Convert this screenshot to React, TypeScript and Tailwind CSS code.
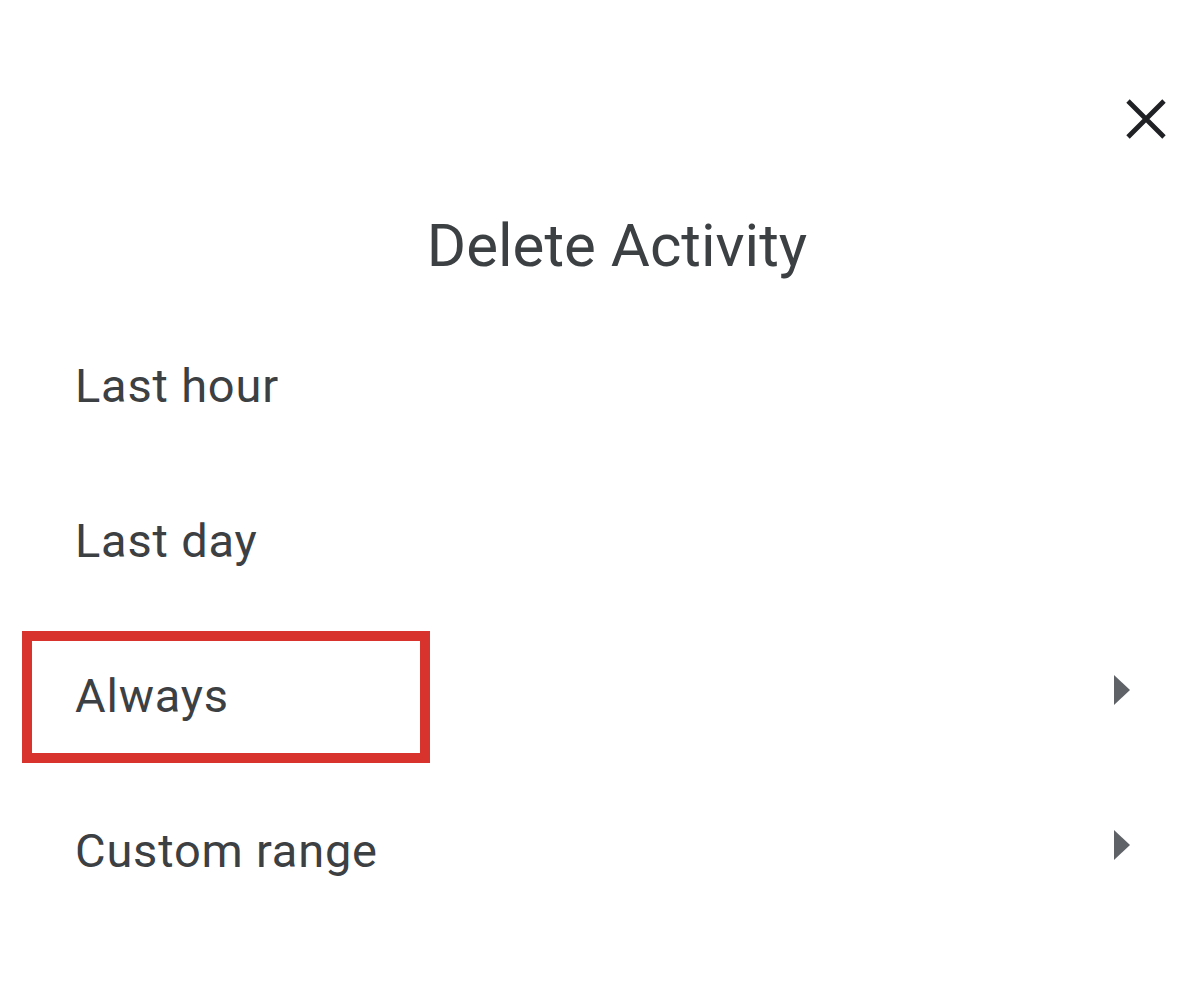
const items = [
  { label: 'Last hour', more: false, marked: false },
  { label: 'Last day', more: false, marked: false },
  { label: 'Always', more: true, marked: true },
  { label: 'Custom range', more: true, marked: false },
]

function CloseIcon() {
  return (
    <svg width="46" height="46" viewBox="0 0 24 24" fill="none">
      <path d="M3.5 3.5L20.5 20.5M20.5 3.5L3.5 20.5" stroke="#202124" strokeWidth="2.5" strokeLinecap="square" />
    </svg>
  )
}

function Caret() {
  return (
    <svg width="18" height="30" viewBox="0 0 18 30" className="-mt-[12px]">
      <path d="M1 0L17 15L1 30Z" fill="#5f6368" />
    </svg>
  )
}

export default function App() {
  return (
    <div
      className="w-[1178px] h-[1006px] bg-white overflow-hidden flex flex-col"
      style={{ fontFamily: 'Roboto, "Noto Sans", sans-serif' }}
    >
      <div className="flex justify-end pt-[96px] pr-[9px]">
        <button className="w-[46px] h-[46px] flex items-center justify-center">
          <CloseIcon />
        </button>
      </div>

      <h1 className="mt-[64px] h-[80px] leading-[80px] text-center pl-[56px] text-[60px] font-normal text-[#3c4043]">
        Delete Activity
      </h1>

      <ul className="mt-[22px] flex flex-col">
        {items.map((item) => (
          <li key={item.label} className="relative h-[155px] flex items-center justify-between pl-[75px] pr-[47px]">
            {item.marked ? (
              <span className="absolute left-[22px] top-[13px] w-[408px] h-[132px] border-[10px] border-[#d8332d]" />
            ) : null}
            <span className="text-[47px] leading-[155px] tracking-[0.8px] text-[#3c4043]">{item.label}</span>
            {item.more ? <Caret /> : null}
          </li>
        ))}
      </ul>
    </div>
  )
}
